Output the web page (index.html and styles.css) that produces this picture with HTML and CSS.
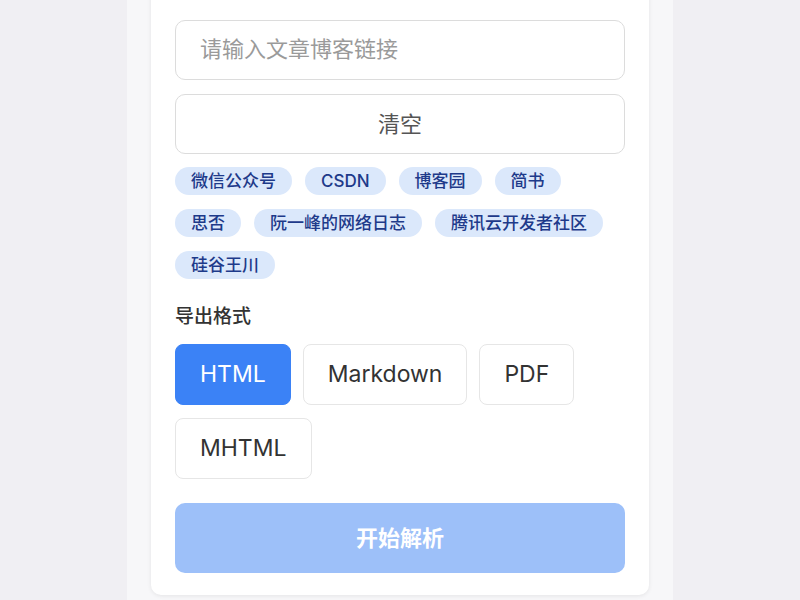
FILE: index.html
```html
<!DOCTYPE html>
<html lang="zh-CN">
<head>
<meta charset="utf-8">
<title>文章导出</title>
<link rel="stylesheet" href="styles.css">
</head>
<body>
<div class="column">
  <div class="card">
    <input class="url-input" type="text" placeholder="请输入文章博客链接">
    <button class="clear-btn">清空</button>
    <div class="tags">
      <span class="tag">微信公众号</span>
      <span class="tag">CSDN</span>
      <span class="tag">博客园</span>
      <span class="tag">简书</span>
      <span class="tag">思否</span>
      <span class="tag">阮一峰的网络日志</span>
      <span class="tag">腾讯云开发者社区</span>
      <span class="tag">硅谷王川</span>
    </div>
    <div class="label">导出格式</div>
    <div class="formats">
      <button class="fmt active">HTML</button>
      <button class="fmt">Markdown</button>
      <button class="fmt">PDF</button>
      <button class="fmt">MHTML</button>
    </div>
    <button class="start-btn">开始解析</button>
  </div>
</div>
</body>
</html>
```

FILE: styles.css
```css
* { box-sizing: border-box; }
html, body { margin: 0; padding: 0; }
body {
  background: #f0eff3;
  font-family: Inter, "Noto Sans CJK SC", sans-serif;
  height: 600px;
  overflow: hidden;
}
.column {
  width: 546px;
  margin: 0 auto;
  min-height: 600px;
  background: #f7f7f9;
  padding: 0 24px;
  overflow: hidden;
}
.card {
  margin-top: -20px;
  background: #fff;
  border-radius: 10px;
  box-shadow: 0 1px 4px rgba(0,0,0,0.08);
  padding: 40px 24px 22px;
  display: flex;
  flex-direction: column;
}
.url-input {
  height: 60px;
  border: 1.5px solid #dcdcdc;
  border-radius: 10px;
  padding: 0 24px 3px;
  font-size: 22px;
  font-family: inherit;
  color: #333;
  outline: none;
  margin: 0 0 14px;
}
.url-input::placeholder { color: #9a9a9a; }
.clear-btn {
  height: 60px;
  border: 1.5px solid #dcdcdc;
  border-radius: 10px;
  background: #fff;
  font-size: 22px;
  font-family: inherit;
  color: #555;
  padding: 0 0 4px;
  margin: 0 0 13px;
}
.tags {
  display: flex;
  flex-wrap: wrap;
  gap: 14px 13px;
}
.tag {
  height: 28px;
  line-height: 28px;
  padding: 0 16px;
  border-radius: 14px;
  background: #dbe8fb;
  color: #1e3a8a;
  font-size: 17px;
  font-weight: 500;
}
.label {
  margin-top: 24px;
  font-size: 19px;
  line-height: 28px;
  color: #333;
  font-weight: 500;
}
.formats {
  margin-top: 13px;
  display: flex;
  flex-wrap: wrap;
  gap: 13px 12px;
}
.fmt {
  height: 61px;
  padding: 0 24px 2px;
  border: 1.5px solid #e6e6e6;
  border-radius: 8px;
  background: #fff;
  font-size: 23px;
  font-family: inherit;
  color: #333;
}
.fmt.active {
  background: #3b82f6;
  border-color: #3b82f6;
  color: #fff;
}
.start-btn {
  margin-top: 24px;
  height: 70px;
  border: none;
  border-radius: 10px;
  background: #9dc0f9;
  color: #fff;
  font-size: 22px;
  font-weight: 600;
  font-family: inherit;
  padding: 0 0 5px;
}
```
